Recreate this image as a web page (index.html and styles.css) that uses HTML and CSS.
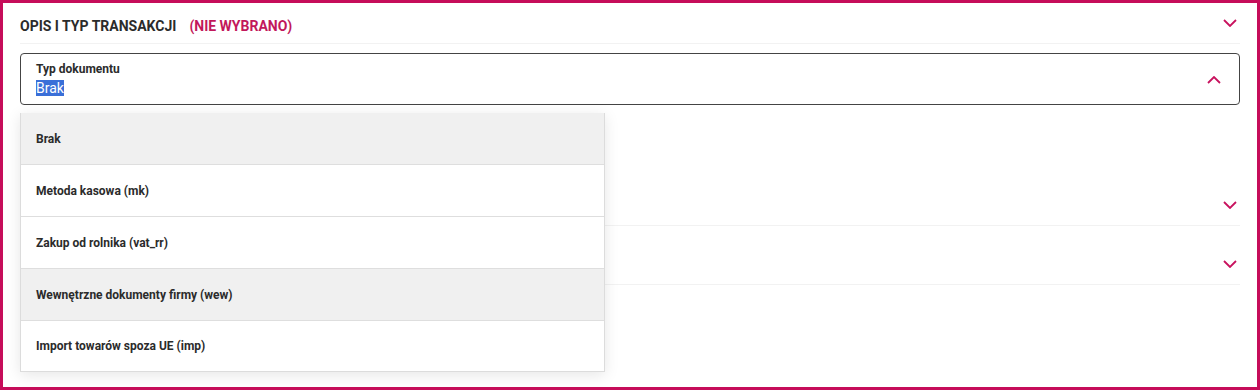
FILE: index.html
```html
<!DOCTYPE html>
<html lang="pl">
<head>
<meta charset="UTF-8">
<title>Opis i typ transakcji</title>
<link rel="stylesheet" href="styles.css">
</head>
<body>
  <div class="frame">
    <!-- sekcja 1: opis i typ -->
    <div class="section">
      <div class="section-head">
        <span class="title">Opis i typ transakcji</span>
        <span class="status">(nie wybrano)</span>
        <svg class="chev" width="14" height="8" viewBox="0 0 14 8"><polyline points="1,1 7,7 13,1" /></svg>
      </div>
      <div class="section-body">
        <div class="select">
          <div class="select-text">
            <div class="select-label">Typ dokumentu</div>
            <div class="select-value"><span class="picked">Brak</span></div>
          </div>
          <svg class="chev" width="14" height="8" viewBox="0 0 14 8"><polyline points="1,7 7,1 13,7" /></svg>
        </div>
        <ul class="dropdown">
          <li class="hover">Brak</li>
          <li>Metoda kasowa (mk)</li>
          <li>Zakup od rolnika (vat_rr)</li>
          <li class="hover">Wewnętrzne dokumenty firmy (wew)</li>
          <li>Import towarów spoza UE (imp)</li>
        </ul>
      </div>
    </div>
    <div class="section">
      <div class="section-head">
        <span class="title">Kontrahent</span>
        <svg class="chev" width="14" height="8" viewBox="0 0 14 8"><polyline points="1,1 7,7 13,1" /></svg>
      </div>
    </div>
    <div class="section">
      <div class="section-head">
        <span class="title">Płatność</span>
        <svg class="chev" width="14" height="8" viewBox="0 0 14 8"><polyline points="1,1 7,7 13,1" /></svg>
      </div>
    </div>
  </div>
</body>
</html>
```

FILE: styles.css
```css
body {
    margin: 0;
    padding: 0;
    font-family: Roboto, 'Liberation Sans', sans-serif;
    color: #2b2b2b;
    background: #fff;
}
.frame {
    width: 1260px;
    height: 390px;
    box-sizing: border-box;
    border: 3px solid #c60d5a;
    padding: 0 17px;
    overflow: hidden;
}
.section {
    margin-bottom: 18px;
}
.section-head {
    height: 40px;
    display: flex;
    align-items: center;
    border-bottom: 1px solid #f2f2f2;
    font-size: 14px;
    font-weight: bold;
    text-transform: uppercase;
}
.title,
.status {
    padding-top: 6px;
}
.status {
    color: #c2185b;
    margin-left: 13px;
}
.chev {
    margin-left: auto;
    margin-right: 3px;
    fill: none;
    stroke: #c8125e;
    stroke-width: 1.8;
}
.section-body {
    position: relative;
    padding-top: 9px;
    padding-bottom: 62px;
}
.select {
    height: 52px;
    box-sizing: border-box;
    border: 1px solid #444;
    border-radius: 4px;
    display: flex;
    align-items: center;
    padding: 0 18px 0 15px;
}
.select .chev {
    margin-right: 0;
    margin-top: 1px;
}
.select-label {
    font-size: 12px;
    font-weight: bold;
    line-height: 14px;
}
.select-value {
    font-size: 14px;
    line-height: 17px;
    margin-top: 4px;
}
.picked {
    background: #3a6fd8;
    color: #fff;
}
.dropdown {
    position: absolute;
    top: 69px;
    left: 0;
    width: 585px;
    margin: 0;
    padding: 0;
    list-style: none;
    background: #fff;
    border: 1px solid #dcdcdc;
    border-top: none;
    box-sizing: border-box;
    box-shadow: 0 3px 14px rgba(0, 0, 0, 0.1);
    z-index: 2;
}
.dropdown li {
    height: 52px;
    box-sizing: border-box;
    display: flex;
    align-items: center;
    padding: 0 15px;
    border-bottom: 1px solid #dedede;
    font-size: 12px;
    font-weight: bold;
    color: #2b2b2b;
}
.dropdown li:last-child {
    height: 50px;
    border-bottom: none;
}
.dropdown li.hover {
    background: #f0f0f0;
}
```
